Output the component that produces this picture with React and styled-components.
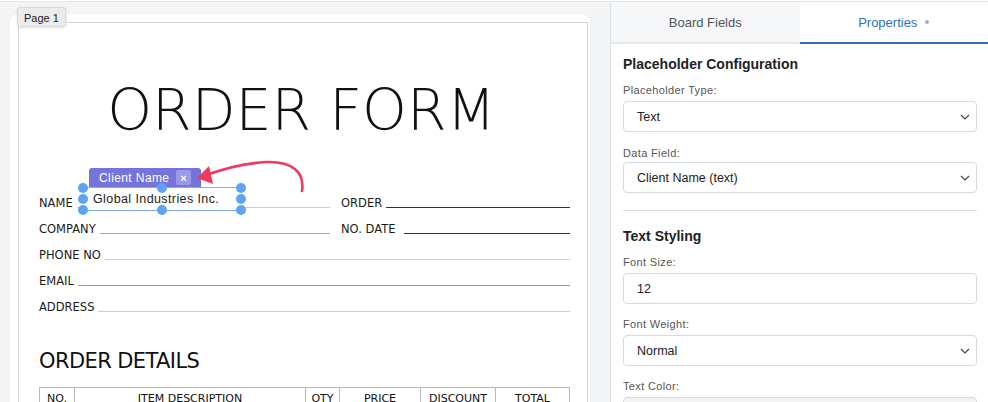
import styled, { createGlobalStyle } from "styled-components";

const Global = createGlobalStyle`
  html, body {
    margin: 0;
    padding: 0;
    background: #ffffff;
    overflow: hidden;
  }
  * { box-sizing: border-box; }
`;

const Shell = styled.div`
  display: flex;
  height: 402px;
  margin-top: 1px;
  border-top: 1px solid #e3e5e9;
  font-family: "Liberation Sans", Arial, sans-serif;
  overflow: hidden;
`;

const Canvas = styled.div`
  width: 610px;
  flex: none;
  background: #f3f4f6;
  padding: 12px 20px 0 10px;
`;

const Card = styled.div`
  position: relative;
  background: #ffffff;
  border-radius: 8px;
  padding: 8px 2px 0 8px;
  height: 420px;
  box-shadow: 0 0 2px rgba(0, 0, 0, 0.06);
`;

const PageTag = styled.div`
  position: absolute;
  left: 7px;
  top: -7px;
  z-index: 3;
  padding: 0 6px;
  height: 20px;
  line-height: 20px;
  background: #ebebeb;
  border: 1px solid #dadada;
  border-radius: 3px;
  box-shadow: 0 1px 3px rgba(0, 0, 0, 0.12);
  font-size: 11px;
  color: #222;
`;

const Doc = styled.div`
  position: relative;
  height: 100%;
  border: 1px solid #d4d4d4;
  border-bottom: none;
  padding: 59px 17px 0 20px;
  font-family: "DejaVu Sans", sans-serif;
  color: #111;
`;

const Title = styled.h1`
  margin: 0;
  font-size: 57px;
  line-height: 56px;
  font-weight: 200;
  text-align: center;
  padding-right: 6px;
`;

const Fields = styled.div`
  margin-top: 51px;
  display: grid;
  grid-template-columns: 291px 1fr;
  column-gap: 11px;
`;

const Field = styled.div`
  display: flex;
  align-items: flex-end;
  height: 26px;
  padding-bottom: 5px;
  gap: ${(p) => p.$gap ?? 4}px;
  grid-column: ${(p) => (p.$wide ? "1 / -1" : "auto")};
`;

const Label = styled.span`
  font-size: 11.5px;
  line-height: 14px;
  white-space: nowrap;
  color: #1a1a1a;
`;

const Line = styled.span`
  flex: 1;
  height: 1px;
  margin-bottom: 2px;
  background: ${(p) => p.$tone || "#cfcfcf"};
`;

const Section = styled.h2`
  margin: 29px 0 0;
  font-size: 21px;
  line-height: 26px;
  font-weight: 400;
  letter-spacing: -0.6px;
`;

const Table = styled.div`
  margin-top: 13px;
  display: grid;
  grid-template-columns: 35px 231px 34px 81px 75px 1fr;
  border-top: 1px solid #b8b8b8;
  border-left: 1px solid #b8b8b8;
`;

const Th = styled.div`
  height: 26px;
  padding-top: 3px;
  line-height: 16px;
  text-align: center;
  font-size: 11px;
  border-right: 1px solid #b8b8b8;
  border-bottom: 1px solid #b8b8b8;
  white-space: nowrap;
`;

const Placeholder = styled.div`
  position: absolute;
  left: 64px;
  top: 164px;
  width: 158px;
  height: 24px;
  z-index: 2;
  background: #ffffff;
  border-top: 1px solid #7fb0f3;
  border-bottom: 1px solid #7fb0f3;
  padding-left: 10px;
  font-family: "Liberation Sans", Arial, sans-serif;
  font-size: 12.5px;
  letter-spacing: 0.4px;
  line-height: 22px;
  color: #1c1c1c;
`;

const FieldTag = styled.div`
  position: absolute;
  left: 70px;
  top: 145px;
  width: 112px;
  height: 19px;
  z-index: 2;
  display: flex;
  align-items: center;
  justify-content: space-between;
  padding: 0 10px 0 10px;
  background: #7474dc;
  border-radius: 3px 3px 0 0;
  font-family: "Liberation Sans", Arial, sans-serif;
  font-size: 12px;
  letter-spacing: 0.4px;
  color: #ffffff;
`;

const Close = styled.span`
  width: 15px;
  height: 15px;
  display: grid;
  place-items: center;
  background: rgba(255, 255, 255, 0.28);
  border-radius: 2px;
  font-size: 11px;
  font-weight: 700;
  letter-spacing: 0;
`;

const Handle = styled.span`
  position: absolute;
  left: calc(${(p) => p.$x}% - 5px);
  top: calc(${(p) => p.$y}% - 5px);
  width: 10px;
  height: 10px;
  border-radius: 50%;
  background: #5ea4f3;
  z-index: 3;
`;

const Arrow = styled.svg`
  position: absolute;
  left: 0;
  top: 0;
  width: 570px;
  height: 400px;
  overflow: visible;
  pointer-events: none;
  z-index: 4;
`;

const Panel = styled.div`
  flex: 1;
  border-left: 1px solid #dcdfe3;
  background: #ffffff;
  display: flex;
  flex-direction: column;
  overflow: hidden;
`;

const Tabs = styled.div`
  flex: none;
  display: flex;
  height: 42px;
`;

const Tab = styled.div`
  flex: 1;
  display: flex;
  align-items: center;
  justify-content: center;
  gap: 8px;
  font-size: 13px;
  color: ${(p) => (p.$active ? "#2f72bd" : "#555")};
  background: ${(p) => (p.$active ? "#ffffff" : "#f6f7f8")};
  border-bottom: 2px solid ${(p) => (p.$active ? "#2f72bd" : "#e6e8eb")};
`;

const Dot = styled.span`
  width: 4px;
  height: 4px;
  border-radius: 50%;
  background: #8fb4de;
`;

const Body = styled.div`
  flex: none;
  padding: 11px 11px 0 12px;
`;

const Heading = styled.div`
  font-size: 14px;
  line-height: 18px;
  font-weight: 700;
  color: #222;
`;

const Group = styled.div`
  margin-top: ${(p) => p.$top ?? 10}px;
`;

const FieldLabel = styled.div`
  font-size: 11px;
  line-height: 14px;
  letter-spacing: 0.35px;
  color: #555;
  margin-bottom: ${(p) => p.$gap ?? 4}px;
`;

const Box = styled.div`
  height: 31px;
  display: flex;
  align-items: center;
  justify-content: space-between;
  padding: 0 6px 0 13px;
  border: 1px solid #d6d9dd;
  border-radius: 4px;
  font-size: 12.5px;
  color: #222;
  background: ${(p) => (p.$muted ? "#f3f3f3" : "#fff")};
`;

const Divider = styled.div`
  height: 1px;
  background: #d9dbde;
  margin: 17px 0 16px;
`;

function Chevron() {
  return (
    <svg width="10" height="6" viewBox="0 0 10 6">
      <polyline points="1,1 5,5 9,1" fill="none" stroke="#444" strokeWidth="1.2" />
    </svg>
  );
}

const handles = [
  [0, 0], [50, 0], [100, 0],
  [0, 50], [100, 50],
  [0, 100], [50, 100], [100, 100],
];

export default function App() {
  return (
    <>
      <Global />
      <Shell>
        <Canvas>
          <Card>
            <PageTag>Page 1</PageTag>
            <Doc>
              <Title>ORDER FORM</Title>
              <Fields>
                <Field>
                  <Label>NAME</Label>
                  <Line />
                </Field>
                <Field>
                  <Label>ORDER</Label>
                  <Line $tone="#333" />
                </Field>
                <Field>
                  <Label>COMPANY</Label>
                  <Line $tone="#aaa" />
                </Field>
                <Field $gap={9}>
                  <Label>NO. DATE</Label>
                  <Line $tone="#333" />
                </Field>
                <Field $wide>
                  <Label>PHONE NO</Label>
                  <Line />
                </Field>
                <Field $wide>
                  <Label>EMAIL</Label>
                  <Line $tone="#999" />
                </Field>
                <Field $wide>
                  <Label>ADDRESS</Label>
                  <Line />
                </Field>
              </Fields>
              <Section>ORDER DETAILS</Section>
              <Table>
                {["NO.", "ITEM DESCRIPTION", "QTY", "PRICE", "DISCOUNT", "TOTAL"].map((h) => (
                  <Th key={h}>{h}</Th>
                ))}
              </Table>

              <FieldTag>
                <span>Client Name</span>
                <Close>×</Close>
              </FieldTag>
              <Placeholder>
                Global Industries Inc.
                {handles.map(([x, y]) => (
                  <Handle key={`${x}-${y}`} $x={x} $y={y} />
                ))}
              </Placeholder>
              <Arrow viewBox="0 0 570 400">
                <g transform="translate(-19,-23)">
                  <path
                    d="M302 191 C305 172, 292 161, 266 162 C246 163, 226 168, 206 175"
                    fill="none"
                    stroke="#f2385c"
                    strokeWidth="2.6"
                    strokeLinecap="round"
                  />
                  <polygon points="197,178 209,166 213,184" fill="#f2385c" />
                </g>
              </Arrow>
            </Doc>
          </Card>
        </Canvas>

        <Panel>
          <Tabs>
            <Tab>Board Fields</Tab>
            <Tab $active>
              Properties <Dot />
            </Tab>
          </Tabs>
          <Body>
            <Heading>Placeholder Configuration</Heading>
            <Group>
              <FieldLabel>Placeholder Type:</FieldLabel>
              <Box>
                Text <Chevron />
              </Box>
            </Group>
            <Group $top={14}>
              <FieldLabel $gap={2}>Data Field:</FieldLabel>
              <Box>
                Client Name (text) <Chevron />
              </Box>
            </Group>
            <Divider />
            <Heading>Text Styling</Heading>
            <Group>
              <FieldLabel>Font Size:</FieldLabel>
              <Box>12</Box>
            </Group>
            <Group $top={13}>
              <FieldLabel>Font Weight:</FieldLabel>
              <Box>
                Normal <Chevron />
              </Box>
            </Group>
            <Group $top={13}>
              <FieldLabel>Text Color:</FieldLabel>
              <Box $muted />
            </Group>
          </Body>
        </Panel>
      </Shell>
    </>
  );
}
